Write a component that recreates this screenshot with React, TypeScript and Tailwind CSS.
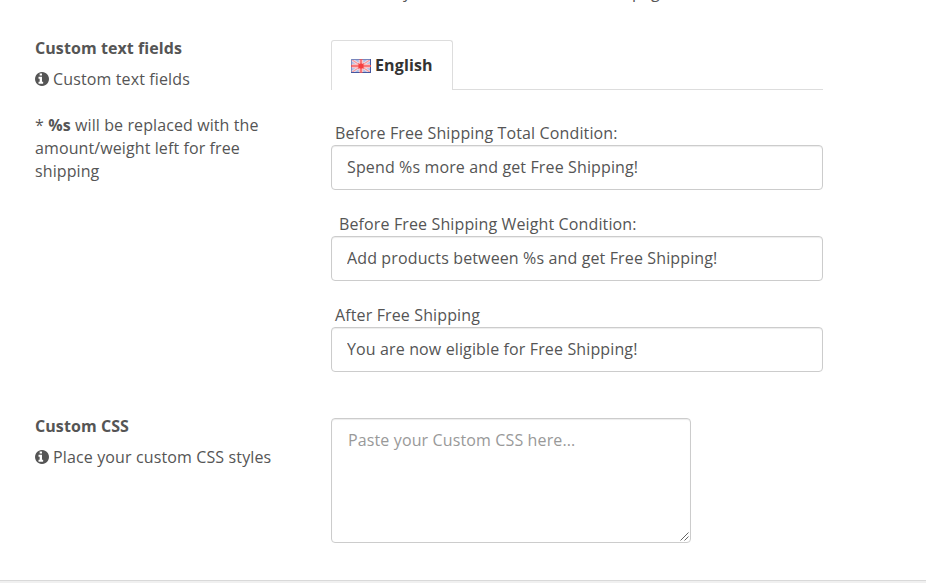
const InfoIcon = () => (
  <svg viewBox="128 128 1536 1536" className="mr-1 inline-block h-[14px] w-[14px] align-[-1px]" fill="currentColor">
    <path d="M1024 1376v-160q0-14-9-23t-23-9h-96v-512q0-14-9-23t-23-9h-320q-14 0-23 9t-9 23v160q0 14 9 23t23 9h96v320h-96q-14 0-23 9t-9 23v160q0 14 9 23t23 9h448q14 0 23-9t9-23zM896 480v-160q0-14-9-23t-23-9h-192q-14 0-23 9t-9 23v160q0 14 9 23t23 9h192q14 0 23-9t9-23zM1664 896q0 209-103 385.500t-279.500 279.500-385.500 103-385.500-103-279.500-279.500-103-385.500 103-385.500 279.500-279.500 385.500-103 385.500 103 279.500 279.500 103 385.500z" />
  </svg>
);

const FlagIcon = () => (
  <svg viewBox="0 0 20 14" className="h-[14px] w-5">
    <rect width="20" height="14" fill="#a9bde6" />
    <path d="M0 0L20 14M20 0L0 14" stroke="#efdfe9" strokeWidth="2.8" />
    <path d="M1 .7L19 13.300M19 .7L1 13.300" stroke="#f49a9d" strokeWidth="1.100" />
    <path d="M10 0V14M0 7H20" stroke="#f9d9dc" strokeWidth="4.600" />
    <path d="M10 0V14M0 7H20" stroke="#f8797a" strokeWidth="2.400" />
    <path d="M7 4.500L13 9.500M13 4.500L7 9.500" stroke="#f66a6a" strokeWidth="1.500" />
    <circle cx="10" cy="7" r="2.600" fill="#f53f3f" />
    <path d="M0 .5H20" stroke="#7886bd" />
    <path d="M.5 0V14" stroke="#8290c2" />
    <path d="M19.500 0V14M0 13.500H20" stroke="#4557a0" />
    <path d="M8.500 .5H11.500M8.500 13.500H11.500M.5 6V8M19.500 6V8" stroke="#d95c68" />
  </svg>
);

const fields = [
  { label: "Before Free Shipping Total Condition:", value: "Spend %s more and get Free Shipping!", pad: "pl-1" },
  { label: "Before Free Shipping Weight Condition:", value: "Add products between %s and get Free Shipping!", pad: "pl-2" },
  { label: "After Free Shipping", value: "You are now eligible for Free Shipping!", pad: "pl-1" },
];

const App = () => {
  return (
    <div className="flex h-[583px] w-[926px] flex-col overflow-hidden bg-white font-['Open_Sans',sans-serif] text-[16px] leading-[23px] tracking-[0.13px] text-[#555]">
      {/* end of the previous setting, scrolled out of view */}
      <div className="flex h-[37px] shrink-0 pl-[403px]">
        <span className="-mt-[19px] w-[229px]">y</span>
        <span className="-mt-[19px]">page</span>
      </div>

      <div className="flex h-[378px] shrink-0 pl-[35px]">
        <div className="w-[296px] pr-[60px]">
          <div className="mb-2 font-bold tracking-[0.08px]">Custom text fields</div>
          <div className="mb-[23px]"><InfoIcon />Custom text fields</div>
          <div className="tracking-[0.1px]">* <b>%s</b> will be replaced with the amount/weight left for free shipping</div>
        </div>
        <div className="w-[492px] pt-[3px]">
          {/* language tabs */}
          <div className="flex h-[50px]">
            <div className="flex w-[122px] items-center gap-[4px] rounded-t-[3px] border border-b-0 border-[#ddd] pl-[19px] font-bold text-[#333]">
              <FlagIcon />
              <span>English</span>
            </div>
            <div className="flex-1 border-b border-[#ddd]"></div>
          </div>
          <div className="mt-8 flex flex-col gap-[23px]">
            {fields.map((f) => (
              <label key={f.label} className="block h-[68px]">
                <span className={`block ${f.pad}`}>{f.label}</span>
                <input
                  defaultValue={f.value}
                  className="block h-[45px] w-full rounded-[4px] border border-[#ccc] px-[15px] pb-[2px] tracking-[0.13px] shadow-[inset_0_1px_1px_rgba(0,0,0,0.075)] outline-none"
                />
              </label>
            ))}
          </div>
        </div>
      </div>

      <div className="flex h-[165px] shrink-0 pl-[35px]">
        <div className="w-[296px]">
          <div className="mb-2 font-bold tracking-[0.08px]">Custom CSS</div>
          <div><InfoIcon />Place your custom CSS styles</div>
        </div>
        <div className="relative mt-[3px] h-[125px] w-[360px]">
          <textarea
            placeholder="Paste your Custom CSS here..."
            className="block h-full w-full resize-none rounded-[4px] border border-[#ccc] px-4 py-[10px] tracking-[0.13px] shadow-[inset_0_1px_1px_rgba(0,0,0,0.075)] outline-none placeholder:text-[#999]"
          />
          {/* resize grip */}
          <svg viewBox="0 0 9 9" className="absolute right-[2px] bottom-[2px] h-[9px] w-[9px]" stroke="#555" strokeWidth="0.900">
            <path d="M.5 8.500L8.500 .5M4.500 8.500L8.500 4.500" />
          </svg>
        </div>
      </div>
      <div className="h-[3px] shrink-0 border-t border-[#d9d9d9] bg-[#f0f0f0]"></div>
    </div>
  );
};

export default App;
